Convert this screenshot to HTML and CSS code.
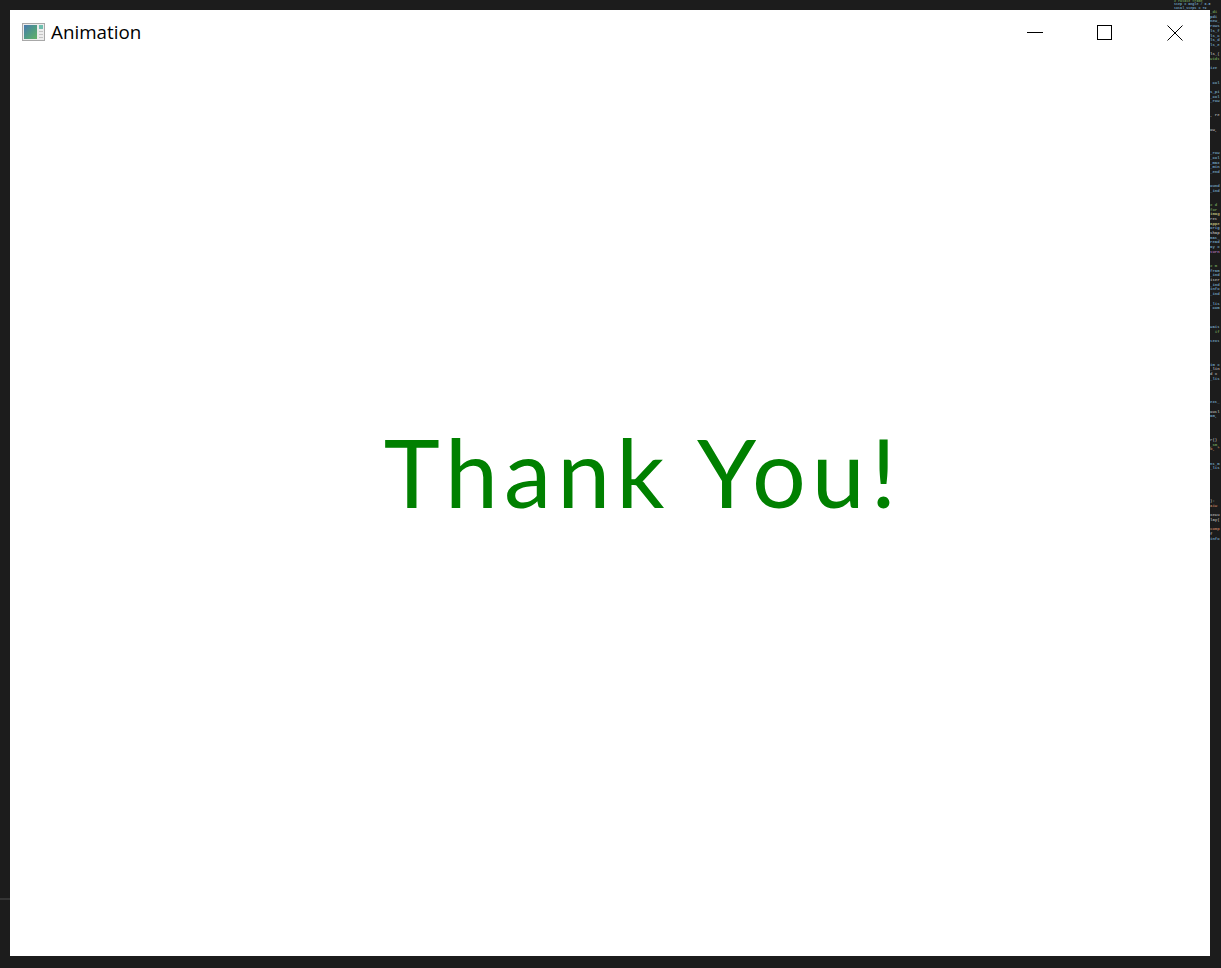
FILE: index.html
```html
<!DOCTYPE html>
<html lang="en">
  <head>
    <meta charset="UTF-8" />
    <meta name="viewport" content="width=device-width, initial-scale=1.0" />
    <title>Animation</title>
    <link rel="stylesheet" href="styles.css">
  </head>
  <body>
    <div class="desktop">
      <pre class="codeTop"><span class="green"># rotate frame</span>
<span class="blue">step = angle / 0.5</span>
<span class="blue">total_steps = 72</span></pre>

      <div class="middle">
        <div class="leftGutter"></div>

        <main class="window">
          <header class="titleBar">
            <div class="titleLeft">
              <svg class="appIcon" width="23" height="18" viewBox="0 0 23 18">
                <defs>
                  <linearGradient id="iconFill" x1="0" y1="0" x2="1" y2="1">
                    <stop offset="0" stop-color="#4a78b0" />
                    <stop offset="0.5" stop-color="#4f9a86" />
                    <stop offset="1" stop-color="#62b266" />
                  </linearGradient>
                </defs>
                <rect x="0.5" y="0.5" width="22" height="17" fill="#ececec" stroke="#a8a8a8" />
                <rect x="2" y="2" width="13" height="14" fill="url(#iconFill)" />
                <rect x="17" y="2" width="4" height="4" fill="#6fbfae" />
                <rect x="17" y="8" width="4" height="1" fill="#c4c4c4" />
                <rect x="17" y="11" width="4" height="1" fill="#c4c4c4" />
                <rect x="17" y="14" width="4" height="1" fill="#c4c4c4" />
              </svg>
              <span class="titleText">Animation</span>
            </div>
            <div class="titleButtons">
              <button class="winButton" aria-label="Minimize">
                <svg width="16" height="16" viewBox="0 0 16 16"><path d="M0 7.5H16" stroke="#000" fill="none" /></svg>
              </button>
              <button class="winButton" aria-label="Maximize">
                <svg width="16" height="16" viewBox="0 0 16 16"><rect x="0.5" y="0.5" width="14" height="14" stroke="#000" fill="none" /></svg>
              </button>
              <button class="winButton" aria-label="Close">
                <svg width="16" height="16" viewBox="0 0 16 16"><path d="M0.5 0.5L15.5 15.5M15.5 0.5L0.5 15.5" stroke="#000" fill="none" /></svg>
              </button>
            </div>
          </header>
          <div class="canvas">
            <h1 class="thanks">Thank You!</h1>
          </div>
        </main>

        <pre class="codeRight"><span class="green">_di</span>
<span class="blue">pdi</span>
<span class="blue">new_</span>
<span class="blue">rows</span>
<span class="blue">ls_f</span>
<span class="blue">ls_c</span>
<span class="blue">ls_d</span>
<span class="blue">ls_e</span>

<span class="gray">ls_(</span>
<span class="green">widt</span>

<span class="blue">ize</span>


<span class="blue"> col</span>

<span class="blue">s_pi</span>
<span class="blue">_col</span>
<span class="blue">_row</span>


<span class="gray">, re</span>


<span class="gray">ow,</span>




<span class="blue">_row</span>
<span class="blue">_col</span>
<span class="blue">_max</span>
<span class="blue">_min</span>
<span class="blue">_end</span>


<span class="blue">ound</span>
<span class="blue">_ind</span>


<span class="green"># d</span>
<span class="green">for</span>
<span class="yellow">imag</span>
<span class="gray">ret</span>
<span class="yellow">appe</span>
<span class="blue">orig</span>
<span class="gray">shap</span>
<span class="blue">mat_</span>
<span class="blue">read</span>
<span class="blue">ay =</span>
<span class="purple">turn</span>


<span class="green"># m</span>
<span class="blue">fram</span>
<span class="blue">_ind</span>
<span class="gray">iter</span>
<span class="blue">_ind</span>
<span class="blue">info</span>
<span class="blue">_ind</span>

<span class="blue">_lis</span>
<span class="blue"> com</span>



<span class="blue">wait</span>
<span class="green">  if</span>

<span class="blue">text</span>




<span class="blue">im =</span>
<span class="gray">_lin</span>
<span class="gray">d =</span>
<span class="blue">_lis</span>




<span class="blue">ext_</span>

<span class="gray">outl</span>
<span class="blue">am,</span>




<span class="gray">r()</span>
<span class="green">_sm,</span>
<span class="red">b, "</span>


<span class="blue">nt_m</span>
<span class="blue">_lis</span>






<span class="gray">):</span>
<span class="red">aiw</span>

<span class="gray">xecu</span>
<span class="gray">lay(</span>

<span class="red">comp</span>
<span class="gray">f</span>
<span class="blue">info</span></pre>
      </div>

      <div class="bottomStrip"></div>
    </div>
  </body>
</html>
```

FILE: styles.css
```css
* {
  margin: 0;
  padding: 0;
  box-sizing: border-box;
}

body {
  background-color: #1c1c1c;
  overflow: hidden;
}

.desktop {
  width: 1221px;
  height: 968px;
  display: flex;
  flex-direction: column;
}

.codeTop {
  height: 10px;
  padding-left: 1174px;
  font-family: "Liberation Mono", monospace;
  font-size: 3.4px;
  font-weight: 700;
  line-height: 3.4px;
  overflow: hidden;
  white-space: pre;
}

.middle {
  height: 946px;
  display: flex;
}

.leftGutter {
  width: 10px;
  height: 100%;
  background: linear-gradient(#1c1c1c 888px, #353535 888px, #353535 890px, #1c1c1c 890px);
}

.window {
  width: 1200px;
  height: 100%;
  background-color: #fff;
  display: flex;
  flex-direction: column;
}

.titleBar {
  height: 44px;
  display: flex;
  justify-content: space-between;
  align-items: center;
}

.titleLeft {
  display: flex;
  align-items: center;
  padding-left: 12px;
  gap: 6px;
}

.appIcon {
  display: block;
}

.titleText {
  font-family: "Open Sans", sans-serif;
  font-size: 18.8px;
  color: #000;
}

.titleButtons {
  display: flex;
  padding-top: 1px;
}

.winButton {
  width: 70px;
  height: 44px;
  border: none;
  background: none;
  display: flex;
  align-items: center;
  justify-content: center;
}

.canvas {
  flex: 1;
  display: flex;
  justify-content: center;
  padding-top: 372px;
  padding-left: 66px;
}

.thanks {
  font-family: "Lato", sans-serif;
  font-size: 95px;
  font-weight: 400;
  line-height: 90px;
  letter-spacing: 6px;
  color: #008000;
  white-space: pre;
}

.codeRight {
  width: 11px;
  overflow: hidden;
  font-family: "Liberation Mono", monospace;
  font-size: 4px;
  font-weight: 700;
  line-height: 4.7px;
  white-space: pre;
}

.blue {
  color: #6f9fbf;
}

.green {
  color: #6a9955;
}

.gray {
  color: #a8a8a8;
}

.yellow {
  color: #b9b77a;
}

.purple {
  color: #a66fb0;
}

.red {
  color: #b5785a;
}

.bottomStrip {
  height: 12px;
}
```
